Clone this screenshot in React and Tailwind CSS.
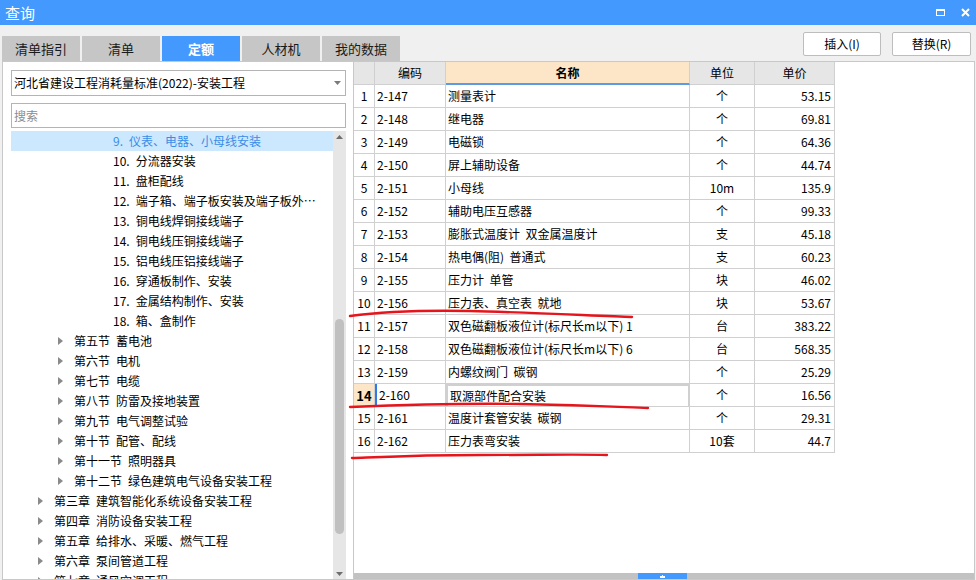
import React from "react";

const tabs = ["清单指引", "清单", "定额", "人材机", "我的数据"];

const leaves = [
  ["9.", "仪表、电器、小母线安装"],
  ["10.", "分流器安装"],
  ["11.", "盘柜配线"],
  ["12.", "端子箱、端子板安装及端子板外…"],
  ["13.", "铜电线焊铜接线端子"],
  ["14.", "铜电线压铜接线端子"],
  ["15.", "铝电线压铝接线端子"],
  ["16.", "穿通板制作、安装"],
  ["17.", "金属结构制作、安装"],
  ["18.", "箱、盒制作"],
];

const sections = [
  ["第五节", "蓄电池"],
  ["第六节", "电机"],
  ["第七节", "电缆"],
  ["第八节", "防雷及接地装置"],
  ["第九节", "电气调整试验"],
  ["第十节", "配管、配线"],
  ["第十一节", "照明器具"],
  ["第十二节", "绿色建筑电气设备安装工程"],
];

const chapters = [
  ["第三章", "建筑智能化系统设备安装工程"],
  ["第四章", "消防设备安装工程"],
  ["第五章", "给排水、采暖、燃气工程"],
  ["第六章", "泵间管道工程"],
  ["第七章", "通风空调工程"],
];

const rows = [
  ["2-147", "测量表计", "个", "53.15"],
  ["2-148", "继电器", "个", "69.81"],
  ["2-149", "电磁锁", "个", "64.36"],
  ["2-150", "屏上辅助设备", "个", "44.74"],
  ["2-151", "小母线", "10m", "135.9"],
  ["2-152", "辅助电压互感器", "个", "99.33"],
  ["2-153", "膨胀式温度计  双金属温度计", "支", "45.18"],
  ["2-154", "热电偶(阻)  普通式", "支", "60.23"],
  ["2-155", "压力计  单管", "块", "46.02"],
  ["2-156", "压力表、真空表  就地", "块", "53.67"],
  ["2-157", "双色磁翻板液位计(标尺长m以下) 1", "台", "383.22"],
  ["2-158", "双色磁翻板液位计(标尺长m以下) 6", "台", "568.35"],
  ["2-159", "内螺纹阀门  碳钢", "个", "25.29"],
  ["2-160", "取源部件配合安装", "个", "16.56"],
  ["2-161", "温度计套管安装  碳钢", "个", "29.31"],
  ["2-162", "压力表弯安装", "10套", "44.7"],
];

const Arrow = () => (
  <svg width="5" height="8" viewBox="0 0 5 8" className="shrink-0">
    <path d="M0 0 L5 4 L0 8 Z" fill="#8a8a8a" />
  </svg>
);

const TreePanel = () => {
  return (
    <div className="w-[351px] bg-white border-l border-t border-b border-[#c8c8c8] pl-[8px] pt-[8px] flex flex-col">
      {/* 定额库下拉 */}
      <div className="w-[335px] h-[26px] border border-[#b4b4b4] flex items-center justify-between pl-[2px] pr-[4px]">
        <span>河北省建设工程消耗量标准(2022)-安装工程</span>
        <svg width="7" height="4" viewBox="0 0 7 4">
          <path d="M0 0 L7 0 L3.5 4 Z" fill="#7a7a7a" />
        </svg>
      </div>
      <div className="w-[335px] h-[25px] mt-[7px] border border-[#b4b4b4] flex items-center pl-[2px] text-[#8c8c8c]">
        搜索
      </div>
      <div className="w-[335px] flex-1 mt-[3px] flex min-h-0 overflow-hidden">
        <div className="w-[322px]">
          {leaves.map(([n, t], i) => (
            <div
              key={n}
              className={`h-[20px] flex items-center pl-[102px] ${i === 0 ? "bg-[#cce8ff] text-[#3a8de6]" : ""}`}
            >
              <span>{n}</span>
              <span className="ml-[6px] whitespace-nowrap">{t}</span>
            </div>
          ))}
          {sections.map(([a, b]) => (
            <div key={a} className="h-[20px] flex items-center pl-[47px] gap-[11px] whitespace-nowrap">
              <Arrow />
              <span>
                {a}
                <span className="ml-[6px]">{b}</span>
              </span>
            </div>
          ))}
          {chapters.map(([a, b]) => (
            <div key={a} className="h-[20px] flex items-center pl-[27px] gap-[11px] whitespace-nowrap">
              <Arrow />
              <span>
                {a}
                <span className="ml-[6px]">{b}</span>
              </span>
            </div>
          ))}
        </div>
        {/* 竖向滚动条 */}
        <div className="w-[13px] bg-[#e6e6e6] flex flex-col items-center justify-between pt-[4px] pb-[3px]">
          <svg width="7" height="4" viewBox="0 0 7 4">
            <path d="M0 4 L7 4 L3.5 0 Z" fill="#6e6e6e" />
          </svg>
          <div className="flex-1 w-full px-[2px] pt-[180px] pb-[38px] flex">
            <div className="flex-1 bg-[#c0c0c0] rounded-[5px]" />
          </div>
          <svg width="7" height="4" viewBox="0 0 7 4">
            <path d="M0 0 L7 0 L3.5 4 Z" fill="#6e6e6e" />
          </svg>
        </div>
      </div>
    </div>
  );
};

const QuotaTable = () => {
  return (
    <div className="flex-1 bg-white border border-[#c8c8c8] flex flex-col">
      <div className="w-[481px]">
        <div className="flex h-[23px]">
          <div className="w-[21px] bg-[#e6e6e6] border-r border-b border-[#d0d0d0]" />
          <div className="w-[71px] bg-[#e6e6e6] border-r border-b border-[#d0d0d0] flex items-center justify-center">编码</div>
          <div className="w-[244px] bg-[#fde6c8] border-r border-[#d0d0d0] border-b-2 border-b-[#5b9be6] flex items-center justify-center font-bold">名称</div>
          <div className="w-[65px] bg-[#e6e6e6] border-r border-b border-[#d0d0d0] flex items-center justify-center">单位</div>
          <div className="w-[80px] bg-[#e6e6e6] border-r border-b border-[#d0d0d0] flex items-center justify-center">单价</div>
        </div>
        {rows.map(([code, name, unit, price], i) => {
          const sel = i === 13;
          return (
            <div key={code} className="flex h-[23px]">
              <div
                className={`w-[21px] border-r border-b border-[#d0d0d0] flex items-center justify-center ${sel ? "bg-[#fde6c8] font-bold text-[13px]" : ""}`}
              >
                {i + 1}
              </div>
              <div
                className={`w-[71px] border-r border-b border-[#d0d0d0] flex items-center pl-[2px] ${sel ? "border-l-2 border-l-[#2f7ae5]" : ""}`}
              >
                {code}
              </div>
              <div
                className={`w-[244px] border-b border-[#d0d0d0] flex items-center pl-[2px] whitespace-pre ${sel ? "border-2 border-[#7f7f7f]" : "border-r"}`}
              >
                {name}
              </div>
              <div className="w-[65px] border-r border-b border-[#d0d0d0] flex items-center justify-center">{unit}</div>
              <div className="w-[80px] border-r border-b border-[#d0d0d0] flex items-center justify-end pr-[3px]">{price}</div>
            </div>
          );
        })}
      </div>
      <div className="flex-1" />
      {/* 底部拖动条 */}
      <div className="h-[6px] bg-[#c2c2c2] flex">
        <div className="w-[284px]" />
        <div className="w-[49px] bg-[#4499ff] flex items-center justify-center">
          <svg width="5" height="3" viewBox="0 0 5 3">
            <path d="M2 0 H3 V1 H5 V3 H0 V1 H2 Z" fill="#ffffff" />
          </svg>
        </div>
      </div>
    </div>
  );
};

const App = () => {
  return (
    <div className="w-[976px] h-[580px] bg-[#f0f0f0] flex flex-col overflow-hidden relative font-['Noto_Sans_CJK_SC',sans-serif] text-[12px] text-black leading-none">
      {/* 标题栏 */}
      <div className="h-[25px] bg-[#4499ff] flex items-center justify-between pl-[5px] pr-[6px] text-white">
        <span className="text-[15px]">查询</span>
        <div className="flex items-center gap-[16px]">
          <div className="w-[9px] h-[7px] border border-white border-t-[2px]" />
          <svg width="9" height="9" viewBox="0 0 9 9">
            <path d="M1 1 L8 8 M8 1 L1 8" stroke="#ffffff" strokeWidth="2" />
          </svg>
        </div>
      </div>

      {/* 页签 + 按钮 */}
      <div className="h-[36px] flex justify-between">
        <div className="flex gap-[2px] pl-[2px] self-end">
          {tabs.map((t) => (
            <div
              key={t}
              className={`w-[78px] h-[25px] flex items-center justify-center text-[13px] ${t === "定额" ? "bg-[#4499ff] text-white font-bold" : "bg-[#c6c6c6] text-[#1a1a1a]"}`}
            >
              {t}
            </div>
          ))}
        </div>
        <div className="flex gap-[11px] pr-[5px] pt-[7px]">
          <div className="w-[78px] h-[24px] bg-white border border-[#bdbdbd] rounded-[2px] flex items-center justify-center">插入(I)</div>
          <div className="w-[79px] h-[24px] bg-white border border-[#bdbdbd] rounded-[2px] flex items-center justify-center">替换(R)</div>
        </div>
      </div>

      <div className="flex-1 flex pl-[2px] pr-[1px] min-h-0">
        <TreePanel />
        <QuotaTable />
      </div>

      {/* 红色手绘标注 */}
      <svg className="absolute left-0 top-0 pointer-events-none" width="976" height="580">
        <g fill="none" stroke="#e8141c" strokeWidth="2.4" strokeLinecap="round">
          <path d="M350 316 C 380 312, 420 310, 470 311 S 600 316, 632 317" />
          <path d="M350 407 C 400 405, 450 403, 520 404 S 620 407, 648 408" />
          <path d="M352 458 C 380 457, 420 455, 480 455 S 580 454, 607 455" />
        </g>
      </svg>
    </div>
  );
};

export default App;
